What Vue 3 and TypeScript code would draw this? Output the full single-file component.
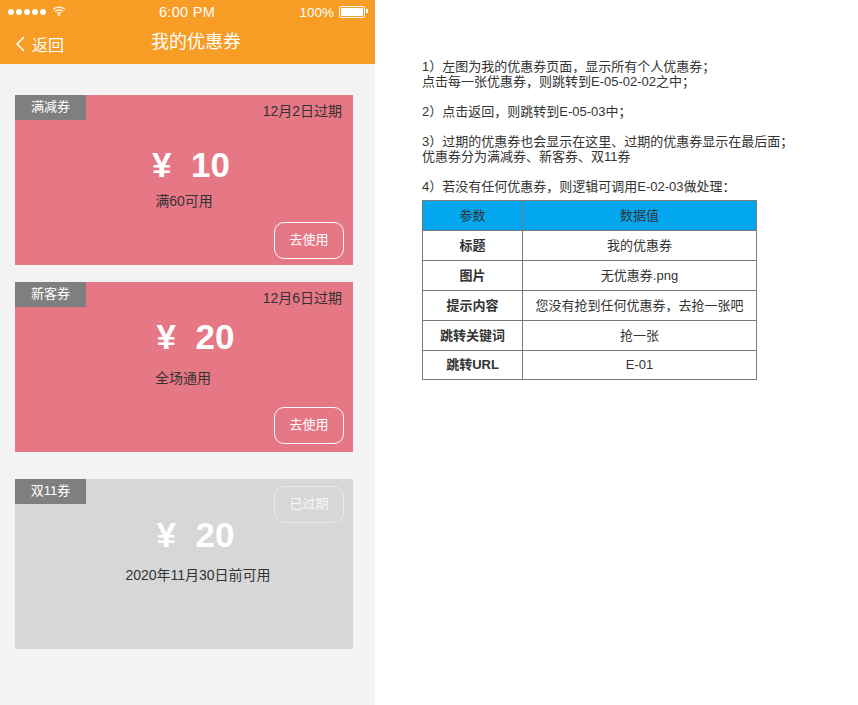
<script setup lang="ts">
interface Coupon {
  tag: string
  amount: string
  rule: string
  date?: string
  action: string
  kind: 'first' | 'second' | 'expired'
}

const coupons: Coupon[] = [
  { tag: '满减券', amount: '10', rule: '满60可用', date: '12月2日过期', action: '去使用', kind: 'first' },
  { tag: '新客券', amount: '20', rule: '全场通用', date: '12月6日过期', action: '去使用', kind: 'second' },
  { tag: '双11券', amount: '20', rule: '2020年11月30日前可用', action: '已过期', kind: 'expired' }
]

const notes: string[][] = [
  ['1）左图为我的优惠券页面，显示所有个人优惠券；', '点击每一张优惠券，则跳转到E-05-02-02之中；'],
  ['2）点击返回，则跳转到E-05-03中；'],
  ['3）过期的优惠券也会显示在这里、过期的优惠券显示在最后面；', '优惠券分为满减券、新客券、双11券'],
  ['4）若没有任何优惠券，则逻辑可调用E-02-03做处理：']
]

const rows = [
  ['标题', '我的优惠券'],
  ['图片', '无优惠券.png'],
  ['提示内容', '您没有抢到任何优惠券，去抢一张吧'],
  ['跳转关键词', '抢一张'],
  ['跳转URL', 'E-01']
]
</script>

<template>
  <div class="page">
    <section class="phone">
      <header class="head">
        <div class="status">
          <div class="signal">
            <i v-for="n in 5" :key="n"></i>
            <svg class="wifi" width="14" height="10" viewBox="0 0 14 10">
              <path d="M1 3.6a8.6 8.6 0 0 1 12 0M3 5.6a5.8 5.8 0 0 1 8 0M5 7.5a3 3 0 0 1 4 0" fill="none" stroke="#fff" stroke-width="1.3" />
              <circle cx="7" cy="9" r="1" fill="#fff" />
            </svg>
          </div>
          <span class="clock">6:00 PM</span>
          <div class="power">
            <span>100%</span>
            <span class="battery"><b></b></span>
          </div>
        </div>
        <div class="nav">
          <div class="back">
            <svg width="11" height="16" viewBox="0 0 11 16">
              <path d="M9 1 2 8l7 7" fill="none" stroke="#fff" stroke-width="1.5" />
            </svg>
            <span>返回</span>
          </div>
          <h1>我的优惠券</h1>
        </div>
      </header>

      <div class="list">
        <article v-for="c in coupons" :key="c.tag" class="coupon" :class="c.kind">
          <span class="tag">{{ c.tag }}</span>
          <span v-if="c.date" class="date">{{ c.date }}</span>
          <div class="amount">¥&nbsp;&nbsp;{{ c.amount }}</div>
          <div class="rule">{{ c.rule }}</div>
          <span class="action">{{ c.action }}</span>
        </article>
      </div>
    </section>

    <section class="doc">
      <p v-for="(note, i) in notes" :key="i">
        <template v-for="line in note" :key="line">{{ line }}<br /></template>
      </p>
      <table>
        <thead>
          <tr>
            <th>参数</th>
            <th>数据值</th>
          </tr>
        </thead>
        <tbody>
          <tr v-for="row in rows" :key="row[0]">
            <td class="name">{{ row[0] }}</td>
            <td>{{ row[1] }}</td>
          </tr>
        </tbody>
      </table>
    </section>
  </div>
</template>

<style>
html,
body {
  margin: 0;
  background: #fff;
}
</style>

<style scoped>
.page {
  display: flex;
  width: 858px;
  height: 705px;
  overflow: hidden;
  font-family: "Liberation Sans", "Noto Sans CJK SC", sans-serif;
  font-size: 13px;
  color: #333;
}

.phone {
  width: 375px;
  height: 705px;
  background: #f3f3f3;
}

.head {
  height: 64px;
  background: #f79c24;
  color: #fff;
}

.status {
  display: flex;
  align-items: center;
  justify-content: space-between;
  height: 24px;
  padding: 0 10px 0 8px;
  font-size: 15px;
  color: #fff;
  position: relative;
}

.signal {
  display: flex;
  align-items: center;
  gap: 2px;
}

.signal i {
  width: 6px;
  height: 6px;
  border-radius: 50%;
  background: #fff;
}

.wifi {
  margin-left: 4px;
  margin-top: -2px;
}

.clock {
  position: absolute;
  left: 159px;
  font-size: 14.5px;
  letter-spacing: 0.3px;
}

.power {
  display: flex;
  align-items: center;
  gap: 5px;
  font-size: 13.5px;
}

.battery {
  display: block;
  width: 22px;
  height: 8px;
  padding: 1px;
  border: 1px solid #fff;
  border-radius: 2px;
  position: relative;
}

.battery::after {
  content: "";
  position: absolute;
  right: -4px;
  top: 2px;
  width: 2px;
  height: 4px;
  background: #fff;
}

.battery b {
  display: block;
  height: 8px;
  background: #fff;
}

.nav {
  display: flex;
  align-items: center;
  height: 40px;
  position: relative;
}

.back {
  display: flex;
  align-items: center;
  gap: 6px;
  padding-left: 15px;
  font-size: 16px;
}

.nav h1 {
  position: absolute;
  left: 151px;
  top: 6px;
  margin: 0;
  font-size: 18px;
  font-weight: 400;
  line-height: 24px;
}

.list {
  padding: 31px 22px 0 15px;
}

.coupon {
  position: relative;
  height: 170px;
  box-sizing: border-box;
  background: #e67785;
  text-align: center;
}

.coupon.first {
  padding-top: 47px;
  margin-bottom: 17px;
}

.coupon.second {
  padding-top: 32px;
  margin-bottom: 27px;
}

.coupon.expired {
  padding-top: 33px;
  background: #d7d7d7;
}

.tag {
  position: absolute;
  left: 0;
  top: 0;
  width: 71px;
  height: 25px;
  background: #7f7f7f;
  color: #fff;
  line-height: 23px;
}

.date {
  position: absolute;
  right: 11px;
  top: 8px;
  font-size: 14px;
  line-height: 16px;
}

.amount {
  height: 46px;
  padding-left: 23px;
  font-size: 35px;
  font-weight: 700;
  line-height: 46px;
  color: #fff;
}

.first .amount {
  padding-left: 14px;
}

.rule {
  font-size: 14px;
  line-height: 16px;
}

.first .rule {
  margin-top: 5px;
}

.second .rule {
  margin-top: 10px;
  padding-right: 2px;
}

.expired .rule {
  margin-top: 9px;
  padding-left: 28px;
}

.action {
  position: absolute;
  right: 9px;
  bottom: 6px;
  box-sizing: border-box;
  width: 70px;
  height: 37px;
  border: 1px solid #fff;
  border-radius: 10px;
  color: #fff;
  line-height: 33px;
}

.second .action {
  bottom: 8px;
}

.expired .action {
  top: 7px;
  bottom: auto;
  border-color: #e8e8e8;
  color: #f7f7f7;
}

.doc {
  padding: 59px 0 0 47px;
  line-height: 15px;
}

.doc p {
  margin: 0 0 15px;
}

.doc p:nth-of-type(4) {
  margin-bottom: 0;
}

table {
  width: 335px;
  margin-top: 6px;
  border-collapse: collapse;
  table-layout: fixed;
}

tr {
  height: 30px;
}

tbody tr:last-child {
  height: 29px;
}

th,
td {
  padding: 0 0 1px;
  border: 1px solid #797979;
  text-align: center;
  font-weight: 400;
}

th:first-child {
  width: 99px;
}

th {
  background: #02a7f0;
}

td.name {
  font-weight: 700;
}
</style>
